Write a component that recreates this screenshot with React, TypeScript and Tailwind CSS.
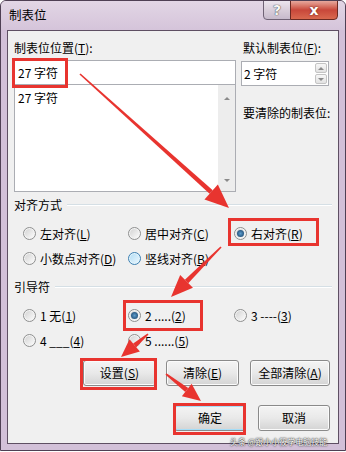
import React from 'react';

type Pt = [number, number];

// tapered red annotation arrow, drawn as polygons
const Arrow = ({ from, to, head = 20, half = 8 }: { from: Pt; to: Pt; head?: number; half?: number }) => {
  const [x1, y1] = from;
  const [x2, y2] = to;
  const len = Math.hypot(x2 - x1, y2 - y1);
  const ux = (x2 - x1) / len;
  const uy = (y2 - y1) / len;
  const px = -uy;
  const py = ux;
  const bx = x2 - ux * head;
  const by = y2 - uy * head;
  const shaft = [
    [x1 + px * 0.8, y1 + py * 0.8],
    [bx + px * 2.4, by + py * 2.4],
    [bx - px * 2.4, by - py * 2.4],
    [x1 - px * 0.8, y1 - py * 0.8],
  ];
  const tip = [
    [x2, y2],
    [bx + px * half, by + py * half],
    [bx - px * half, by - py * half],
  ];
  const pts = (a: number[][]) => a.map((p) => p.join(',')).join(' ');
  return (
    <g fill="#e8342f">
      <polygon points={pts(shaft)} />
      <polygon points={pts(tip)} />
    </g>
  );
};

const Radio = ({ checked, hover }: { checked?: boolean; hover?: boolean }) => (
  <span
    className={`relative flex h-[13px] w-[13px] shrink-0 items-center justify-center rounded-full border ${
      hover ? 'border-[#3c7fb1] bg-[#e3f4fc]' : 'border-[#8e8f8f] bg-[#f4f4f4]'
    }`}
  >
    <span
      className={`h-[9px] w-[9px] rounded-full bg-linear-to-br ${
        hover ? 'from-[#b5def5] to-[#e8f6fd]' : 'from-[#d4d4d4] to-[#fbfbfb]'
      }`}
    />
    {checked && (
      <span className="absolute h-[7px] w-[7px] rounded-full bg-radial from-[#5d9ccc] to-[#143f66]" />
    )}
  </span>
);

const Opt = ({ children, checked, hover }: { children: React.ReactNode; checked?: boolean; hover?: boolean }) => (
  <div className="flex h-[25px] items-center gap-[4px] whitespace-nowrap">
    <Radio checked={checked} hover={hover} />
    <span>{children}</span>
  </div>
);

const Group = ({ title }: { title: string }) => (
  <div className="flex h-[16px] items-center pr-[6px]">
    <span className="pl-[6px]">{title}</span>
    <div className="ml-[5px] h-[2px] flex-1 border-t border-b border-t-[#d5dfe5] border-b-white" />
  </div>
);

const Btn = ({ children, w, def }: { children: React.ReactNode; w: string; def?: boolean }) => (
  <div
    className={`flex h-[26px] items-center justify-center rounded-[3px] border border-[#8a8a8a] bg-linear-to-b from-[#f4f4f4] via-[#e9e9e9] to-[#d4d4d4] ${w} ${
      def ? 'shadow-[inset_0_0_0_1px_#a6ddf7]' : 'shadow-[inset_0_0_0_1px_#fbfbfb]'
    }`}
  >
    {children}
  </div>
);

const Tri = ({ up }: { up?: boolean }) => (
  <span
    className={`h-0 w-0 border-x-[3px] border-x-transparent ${
      up ? 'border-b-[3px] border-b-[#8a8a8a]' : 'border-t-[3px] border-t-[#8a8a8a]'
    }`}
  />
);

export default function App() {
  return (
    <div className="relative h-[452px] w-[346px] overflow-hidden bg-white">
      <div className="relative h-[451px] w-[346px] overflow-hidden rounded-t-[6px] border border-[#4f4054] bg-[#d2c0d8] font-['Noto_Sans_CJK_SC',sans-serif] text-[12px] leading-[16px] text-black">
        {/* title bar */}
        <div className="flex h-[29px] items-start justify-between bg-linear-to-b from-[#e2d6e5] to-[#d5c4da]">
          <span className="pl-[8px] pt-[6px] text-[12.5px] leading-[16px]">制表位</span>
          <div className="-mt-px mr-[7px] flex h-[20px]">
            <div className="flex w-[28px] items-center justify-center rounded-bl-[4px] border border-[#6f6275] bg-linear-to-b from-[#ece5ee] via-[#d9ceda] to-[#c7bacc] font-['DejaVu_Sans',sans-serif] text-[14px] font-bold text-[#f6f6f6] [text-shadow:0_0_1px_#444,0_0_1px_#444]">
              ?
            </div>
            <div className="-ml-px flex w-[48px] items-center justify-center rounded-br-[4px] border border-[#6b2a22] bg-linear-to-b from-[#e6a89d] via-[#c8473a] to-[#d9684f] font-['DejaVu_Sans',sans-serif] text-[14px] font-bold text-white [text-shadow:0_0_2px_#5a1a12]">
              x
            </div>
          </div>
        </div>

        {/* client area */}
        <div className="mx-[6px] h-[414px] border border-[#5e4f63] bg-[#f0f0f0]">
          <div className="flex pt-[9px]">
            <div className="w-[228px] pl-[6px]">
              <div>
                制表位位置(<u>T</u>):
              </div>
              <div className="mt-[4px] flex h-[25px] items-center border border-[#abadb3] bg-white pl-[3px]">27 字符</div>
              <div className="flex h-[107px] border-x border-b border-[#abadb3] bg-white">
                <div className="flex-1 pl-[3px] pt-[5px]">27 字符</div>
                <div className="flex w-[17px] flex-col items-center justify-between bg-[#ededed] pb-[9px] pt-[12px]">
                  <Tri up />
                  <Tri />
                </div>
              </div>
            </div>
            <div className="ml-[5px] w-[88px] whitespace-nowrap">
              <div className="pl-[2px]">
                默认制表位(<u>F</u>):
              </div>
              <div className="mt-[5px] flex h-[25px] items-center border border-[#abadb3] bg-white pl-[2px] pr-[1px]">
                <span className="flex-1">2 字符</span>
                <div className="flex flex-col gap-px">
                  <div className="flex h-[10px] w-[12px] items-center justify-center rounded-[2px] border border-[#c4c4c4] bg-linear-to-b from-[#f7f7f7] to-[#e2e2e2]">
                    <Tri up />
                  </div>
                  <div className="flex h-[10px] w-[12px] items-center justify-center rounded-[2px] border border-[#c4c4c4] bg-linear-to-b from-[#f7f7f7] to-[#e2e2e2]">
                    <Tri />
                  </div>
                </div>
              </div>
              <div className="mt-[19px] pl-[2px]">要清除的制表位:</div>
            </div>
          </div>

          <div className="mt-[5px]">
            <Group title="对齐方式" />
          </div>
          <div className="mt-[8px] grid grid-cols-[105px_106px_auto] pl-[15px]">
            <Opt>
              左对齐(<u>L</u>)
            </Opt>
            <Opt>
              居中对齐(<u>C</u>)
            </Opt>
            <Opt checked>
              右对齐(<u>R</u>)
            </Opt>
            <Opt>
              小数点对齐(<u>D</u>)
            </Opt>
            <Opt hover>
              竖线对齐(<u>B</u>)
            </Opt>
          </div>

          <div className="mt-[8px]">
            <Group title="引导符" />
          </div>
          <div className="mt-[8px] grid grid-cols-[105px_106px_auto] pl-[15px]">
            <Opt>
              1 无(<u>1</u>)
            </Opt>
            <Opt checked>
              2 .....(<u>2</u>)
            </Opt>
            <Opt>
              3 ----(<u>3</u>)
            </Opt>
            <Opt>
              4 ___(<u>4</u>)
            </Opt>
            <Opt>
              5 ......(<u>5</u>)
            </Opt>
          </div>

          <div className="mt-[7px] flex pl-[75px]">
            <Btn w="w-[73px]">
              设置(<u>S</u>)
            </Btn>
            <div className="ml-[10px]">
              <Btn w="w-[73px]">
                清除(<u>E</u>)
              </Btn>
            </div>
            <div className="ml-[11px]">
              <Btn w="w-[80px]">
                全部清除(<u>A</u>)
              </Btn>
            </div>
          </div>

          <div className="mt-[19px] flex pl-[166px]">
            <Btn w="w-[72px]" def>
              确定
            </Btn>
            <div className="ml-[12px]">
              <Btn w="w-[72px]">取消</Btn>
            </div>
          </div>
        </div>

        {/* annotations */}
        <svg className="pointer-events-none absolute -left-px -top-px" width="346" height="452" viewBox="0 0 346 452">
          <g fill="none" stroke="#e8342f" strokeWidth="3">
            <rect x="13.5" y="59.5" width="53" height="27" />
            <rect x="229.5" y="219.5" width="88" height="25" />
            <rect x="124.5" y="301.5" width="77" height="28" />
            <rect x="81.5" y="359.5" width="74" height="29" />
            <rect x="174.5" y="404.5" width="70" height="29" />
          </g>
          <Arrow from={[80, 74]} to={[229, 208]} head={24} half={10} />
          <Arrow from={[221, 247]} to={[171, 297]} head={22} half={9} />
          <Arrow from={[148, 334]} to={[121, 357]} head={18} half={8} />
          <Arrow from={[166, 374]} to={[201, 401]} head={18} half={8} />
        </svg>
      </div>

      <div className="pointer-events-none absolute left-[230px] top-[436px] whitespace-nowrap font-['Noto_Sans_CJK_SC',sans-serif] text-[8px] leading-[12px] text-white [text-shadow:0_0_2px_#222,0_0_1px_#222]">
        头条 @跟小小筱学电脑技能
      </div>
    </div>
  );
}
